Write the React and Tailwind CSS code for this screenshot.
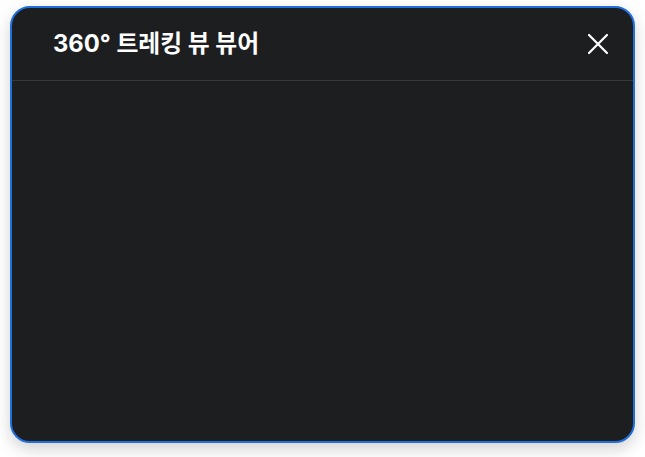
export default function App() {
  return (
    <div className="min-h-[457px] bg-white pl-[10px] pt-[6px]">
      <div className="flex h-[437px] w-[625px] flex-col overflow-hidden rounded-[20px] border-2 border-[#1f6fdc] bg-[#1d1e20] shadow-[0_6px_16px_rgba(0,0,0,0.18)]">
        <div className="flex h-[73px] shrink-0 items-center justify-between border-b border-[#36363c] pl-[41px] pr-[23px]">
          <h2
            className="text-[23.8px] font-bold leading-none text-white"
            style={{ fontFamily: '"Inter", "Noto Sans CJK KR", sans-serif' }}
          >
            360° 트레킹 뷰 뷰어
          </h2>
          <button className="flex h-[24px] w-[24px] items-center justify-center text-white">
            <svg width="24" height="24" viewBox="0 0 24 24" fill="none" stroke="currentColor" strokeWidth="2.2" strokeLinecap="round">
              <path d="M3 3L21 21M21 3L3 21" />
            </svg>
          </button>
        </div>
        <div className="flex-1" />
      </div>
    </div>
  )
}
